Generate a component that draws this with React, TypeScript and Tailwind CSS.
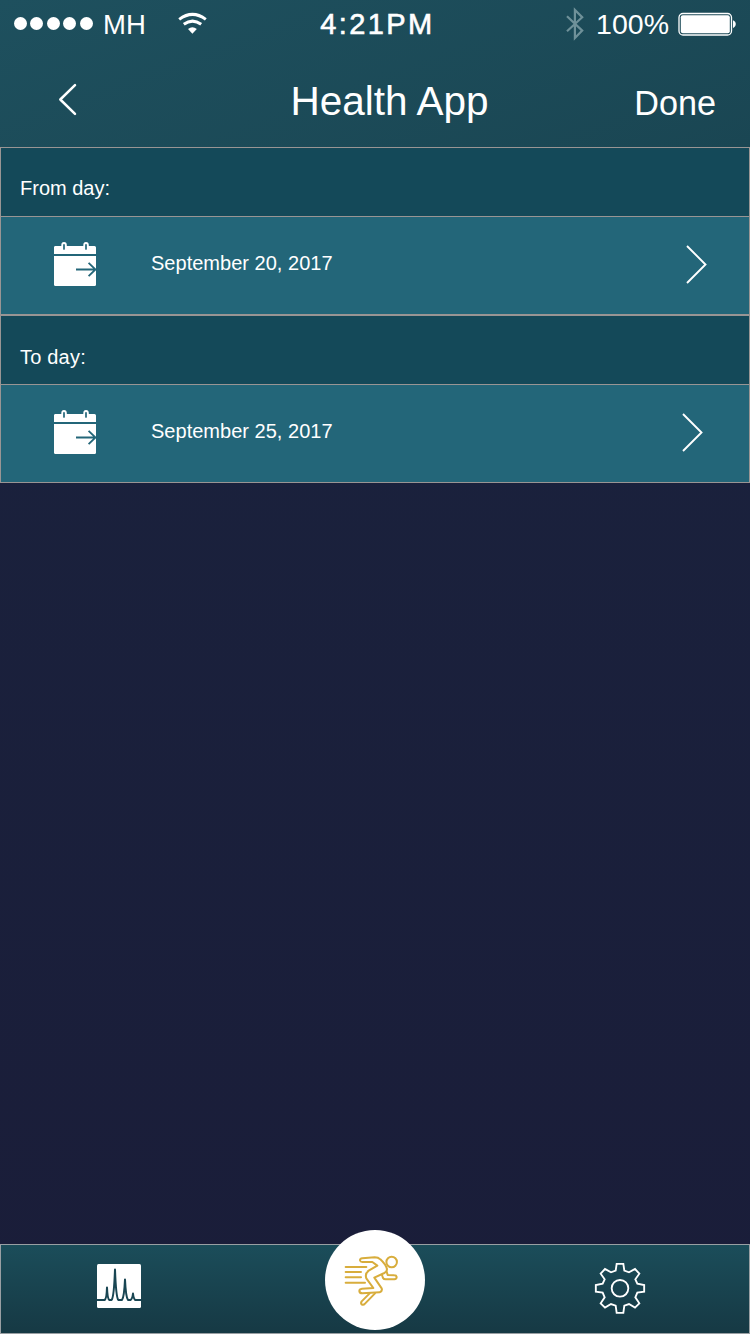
import React from 'react';

function WifiIcon() {
  return (
    <svg className="h-[24px] w-[30px]" viewBox="178 11 30 24" fill="none" stroke="#fff">
      <path d="M180.2 18.4Q193.5 8.4 206.8 18.4" strokeWidth="3" />
      <path d="M184.8 23.3Q193.5 16.9 202.2 23.3" strokeWidth="3" />
      <path d="M189 28.1Q193.4 24.5 197.8 28.1L193.4 32.8Z" fill="#fff" stroke="none" />
    </svg>
  );
}

function BluetoothIcon() {
  return (
    <svg className="h-[36px] w-[20px]" viewBox="565 5 20 36" fill="none" stroke="#6f9199" strokeWidth="2.2">
      <path d="M567 15.2L582.2 29.6L574.9 37V9L582.2 16.2L567 30.2" />
    </svg>
  );
}

function BatteryIcon() {
  return (
    <svg className="h-[24px] w-[58px]" viewBox="678 11 58 24">
      <rect x="679" y="12.5" width="52.5" height="21.500" rx="4" fill="none" stroke="#fff" strokeWidth="1.3" />
      <rect x="680.8" y="14.3" width="49" height="18" rx="2" fill="#fff" />
      <path d="M733 19.2C736.7 20.5 736.7 25.7 733 27Z" fill="#fff" />
    </svg>
  );
}

function CalendarIcon() {
  return (
    <svg className="h-[46px] w-[46px]" viewBox="0 0 46 46">
      <path
        d="M3 6H9.300V5Q9.300 2 12 2Q14.8 2 14.8 5V6H31.300V5Q31.300 2 34 2Q36.8 2 36.8 5V6H42.5Q44 6 44 7.5V14H2V7.5Q2 6 3 6Z"
        fill="#fff"
      />
      <path d="M2 16H44V44.5Q44 46 42.5 46H3.5Q2 46 2 44.5Z" fill="#fff" />
      <path d="M12 4.800V9M34 4.800V9" stroke="#236679" strokeWidth="1.7" strokeLinecap="round" />
      <path d="M24 29.5H43.5M36.6 22.8L43.5 29.5L36.6 36.2" fill="none" stroke="#236679" strokeWidth="1.8" />
    </svg>
  );
}

function Chevron() {
  return (
    <svg className="h-[40px] w-[22px]" viewBox="0 0 22 40" fill="none" stroke="#fff" strokeWidth="1.9">
      <path d="M1 2L19.5 20.5L1 39" />
    </svg>
  );
}

function SpectrumIcon() {
  return (
    <svg className="h-[44px] w-[44px]" viewBox="0 0 44 44">
      <rect width="44" height="44" rx="1.5" fill="#fff" />
      <path
        d="M0 36H7.6Q9.6 35 10 23.5Q10.5 35 12.3 36H14.6Q17 33 18 5.5Q19 33 21.3 36H25Q27.2 33 28 15.5Q28.8 33 31 36H33.6Q35.5 34.5 36 29.5Q36.5 34.5 38.2 36H44"
        fill="none"
        stroke="#194653"
        strokeWidth="2"
        strokeLinejoin="round"
      />
    </svg>
  );
}

function RunnerIcon() {
  return (
    <svg
      className="h-[52px] w-[56px]"
      viewBox="10 15 168 156"
      fill="none"
      stroke="#d8ad3c"
      strokeWidth="6"
      strokeLinecap="round"
      strokeLinejoin="round"
    >
      <circle cx="156" cy="36" r="15.8" />
      <path d="M18 51H80M18 66H64M18 82H64M18 98H76" />
      <path d="M105 22L68 25Q61 26 61 31Q62 36 68 36L98 36L113 47L87 62Q75 71 80 85L101 114L67 116Q59 117 59 123Q60 130 68 130L120 127Q129 124 126 115L104 83L134 69Q142 65 142 57Q139 44 122 28Q116 22 105 22Z" />
      <path d="M127 75L130 84Q132 88 138 88H164Q171 87 171 81Q170 76 164 76L144 75L141 65" />
      <path d="M90 130L66 154Q62 160 67 164Q72 166 76 161L106 130" />
    </svg>
  );
}

function GearIcon() {
  return (
    <svg
      className="h-[52px] w-[52px]"
      viewBox="42 82 156 156"
      fill="none"
      stroke="#fff"
      strokeWidth="5.600"
      strokeLinejoin="miter"
    >
      <path d="M110 87.500H130L133 108L147 113L165 103L178 117L166 134L172 147L192.500 151V171L172 174L166 188L178 206L165 219L147 208L133 213L130 234.500H110L107 213L93 208L75 219L62 206L74 188L68 174L47.500 171V151L68 147L74 134L62 117L75 103L93 113L107 108Z" />
      <circle cx="120" cy="161" r="25" />
    </svg>
  );
}

function Dots() {
  return (
    <div className="flex gap-[3.400px]">
      {[0, 1, 2, 3, 4].map((i) => (
        <span key={i} className="h-[13px] w-[13px] rounded-full bg-white" />
      ))}
    </div>
  );
}

type DateSectionProps = { label: string; date: string; labelClass: string; chevronClass: string };

function DateSection({ label, date, labelClass, chevronClass }: DateSectionProps) {
  return (
    <section>
      <div className="flex h-[69px] items-start border-x border-t border-[#999594] bg-[#144959] pl-[19px]">
        <h2 className={labelClass}>{label}</h2>
      </div>
      <button className="flex h-[99px] w-full items-start border border-[#999594] bg-[#236679] text-left">
        <span className="mt-[23px] ml-[51px]">
          <CalendarIcon />
        </span>
        <span className="mt-[34px] ml-[53px] text-[20px] leading-[24px] tracking-[0.02px]">{date}</span>
        <span className={chevronClass}>
          <Chevron />
        </span>
      </button>
    </section>
  );
}

export default function App() {
  return (
    <div className="flex h-[1334px] w-[750px] flex-col overflow-hidden bg-linear-to-b from-[#1a233e] to-[#1a1d39] font-['Liberation_Sans',Arial,sans-serif] text-white">
      <header className="h-[147px] bg-linear-[160deg] from-[#1e505e] to-[#1a4653]">
        <div className="grid h-[47px] grid-cols-3 items-center">
          <div className="flex items-center pl-[14px]">
            <Dots />
            <span className="ml-[9px] pt-[2px] pl-[1.500px] text-[27.500px] leading-[32px]">MH</span>
            <span className="ml-[31.500px]">
              <WifiIcon />
            </span>
          </div>
          <div className="pl-[5px] text-center text-[29px] leading-[32px] tracking-[2.400px] [-webkit-text-stroke:0.6px_white]">
            4:21PM
          </div>
          <div className="flex items-center justify-end pr-[14px]">
            <BluetoothIcon />
            <span className="mr-[9px] ml-[11px] text-[28.500px] leading-[32px]">100%</span>
            <BatteryIcon />
          </div>
        </div>
        <div className="grid h-[100px] grid-cols-3">
          <button className="flex items-start pt-[36px] pl-[58px]" aria-label="Back">
            <svg className="h-[34px] w-[20px]" viewBox="0 0 20 34" fill="none" stroke="#fff" strokeWidth="2.5" strokeLinecap="round" strokeLinejoin="round">
              <path d="M17 2.200L2.300 16.500L17 30.800" />
            </svg>
          </button>
          <h1 className="pt-[30px] pl-[29px] text-center text-[40.500px] leading-[48px] whitespace-nowrap">Health App</h1>
          <button className="flex items-start justify-end pt-[36px] pr-[34px] text-[34.200px] leading-[40px]">Done</button>
        </div>
      </header>
      <main className="flex-1">
        <DateSection
          label="From day:"
          date="September 20, 2017"
          labelClass="mt-[28px] text-[20px] leading-[24px]"
          chevronClass="mt-[27px] mr-[41px] ml-auto"
        />
        <DateSection
          label="To day:"
          date="September 25, 2017"
          labelClass="mt-[29px] text-[20px] leading-[24px] tracking-[0.2px]"
          chevronClass="mt-[27px] mr-[45px] ml-auto"
        />
      </main>
      <nav className="relative flex h-[90px] items-start justify-between border border-[#999fa3] bg-linear-to-b from-[#1b4d5a] to-[#163944]">
        <button className="mt-[19px] ml-[96px]" aria-label="Spectrum">
          <SpectrumIcon />
        </button>
        <button
          className="absolute top-[-15px] left-[324px] flex h-[100px] w-[100px] items-start rounded-full bg-white pt-[25px] pl-[18px]"
          aria-label="Activity"
        >
          <RunnerIcon />
        </button>
        <button className="mt-[17px] mr-[103px]" aria-label="Settings">
          <GearIcon />
        </button>
      </nav>
    </div>
  );
}
